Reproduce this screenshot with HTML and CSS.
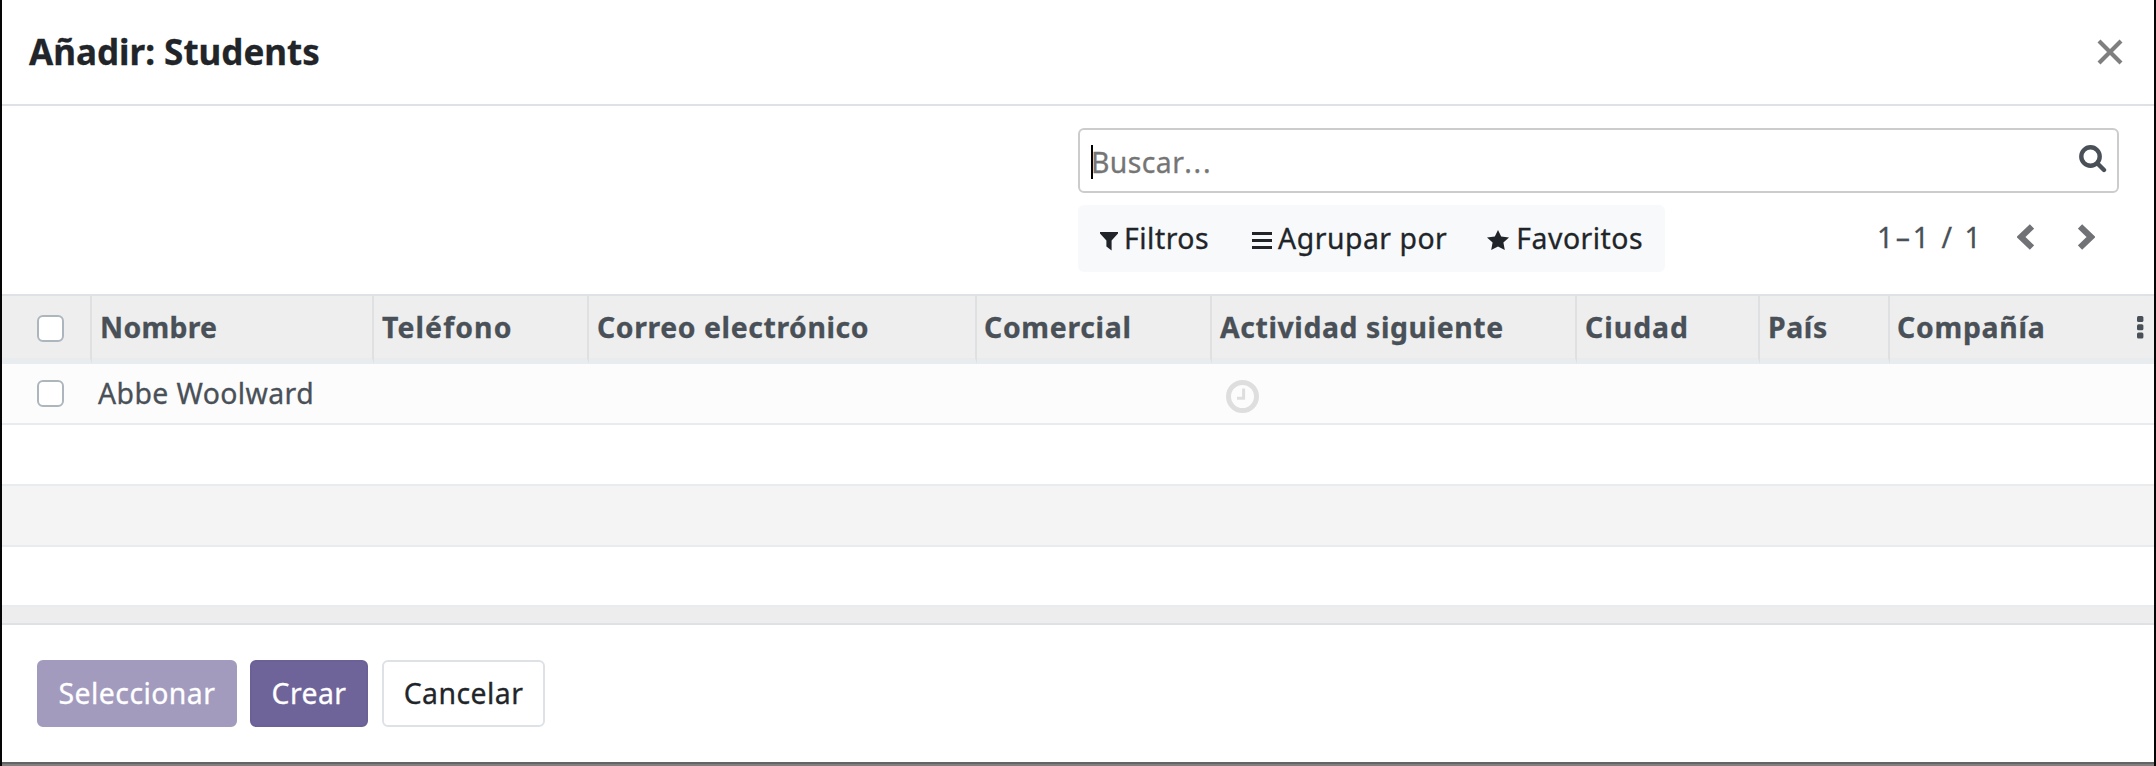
FILE: index.html
```html
<!DOCTYPE html>
<html lang="es">
<head>
<meta charset="utf-8">
<title>Añadir: Students</title>
<link rel="stylesheet" href="styles.css">
</head>
<body>
<div class="modal">
  <header class="modal-header">
    <h1 class="title">Añadir: Students</h1>
    <svg class="close" viewBox="0 0 26 26"><path d="M2 2 24 24M24 2 2 24"/></svg>
  </header>

  <section class="control-panel">
    <div class="search">
      <span class="caret"></span>
      <span class="placeholder">Buscar<span class="dots">...</span></span>
      <svg class="search-icon" viewBox="0 0 28 28"><circle cx="11.5" cy="11.5" r="9.2"/><path d="M18.5 18.5 25 25"/></svg>
    </div>
    <div class="tools">
      <div class="filters">
        <span class="filter"><svg class="funnel" viewBox="0 0 18 19"><path d="M0 0H18V1.6L11.6 8.4V18.6L6.4 14.6V8.4L0 1.6Z"/></svg>Filtros</span>
        <span class="filter"><svg class="bars" viewBox="0 0 20 17"><path d="M0 0H20V3H0ZM0 7H20V10H0ZM0 14H20V17H0Z"/></svg>Agrupar por</span>
        <span class="filter"><svg class="star" viewBox="0 0 22 20"><path d="M11 0 14.2 6.5 22 7.6 16.4 12.6 17.8 20 11 16.5 4.2 20 5.6 12.6 0 7.6 7.8 6.5Z"/></svg>Favoritos</span>
      </div>
      <div class="pager">
        <span class="count">1–1 / 1</span>
        <svg class="chevron" viewBox="0 0 17 26"><path d="M15 2.4 4 13 15 23.6"/></svg>
        <svg class="chevron next" viewBox="0 0 17 26"><path d="M2 2.4 13 13 2 23.6"/></svg>
      </div>
    </div>
  </section>

  <section class="list">
    <div class="row head">
      <div class="cell check"><span class="box"></span></div>
      <div class="cell nombre">Nombre</div>
      <div class="cell telefono">Teléfono</div>
      <div class="cell correo">Correo electrónico</div>
      <div class="cell comercial">Comercial</div>
      <div class="cell actividad">Actividad siguiente</div>
      <div class="cell ciudad">Ciudad</div>
      <div class="cell pais">País</div>
      <div class="cell compania">Compañía
        <svg class="dots-menu" viewBox="0 0 7 23"><rect width="6.4" height="6" rx="1.5"/><rect y="8.3" width="6.4" height="6" rx="1.5"/><rect y="16.6" width="6.4" height="6" rx="1.5"/></svg>
      </div>
    </div>
    <div class="row record">
      <div class="check"><span class="box"></span></div>
      <div class="name">Abbe Woolward</div>
      <div class="activity"><svg class="clock" viewBox="0 0 33 33"><circle cx="16.5" cy="16.5" r="14"/><path d="M17.6 8.5V18.2H11"/></svg></div>
    </div>
    <div class="row blank"></div>
    <div class="row blank shaded"></div>
    <div class="row blank last"></div>
    <div class="list-foot"></div>
  </section>

  <footer class="modal-footer">
    <button class="btn select" disabled>Seleccionar</button>
    <button class="btn create">Crear</button>
    <button class="btn cancel">Cancelar</button>
  </footer>
</div>
</body>
</html>
```
FILE: styles.css
```css
* { box-sizing: border-box; }

body {
  margin: 0;
  height: 766px;
  overflow: hidden;
  padding: 0 2px;
  background: #050506;
  font: 28.4px/40px "Noto Sans", "Open Sans", sans-serif;
  letter-spacing: 0.4px;
  color: #212529;
  -webkit-text-stroke: 0.3px currentColor;
}

svg { display: block; flex: none; }

.modal {
  display: flex;
  flex-direction: column;
  height: 766px;
  background: #fff;
  border-bottom: 2px solid #808080;
  box-shadow: inset 0 -2px 0 #646464;
}

.modal-header {
  display: flex;
  align-items: center;
  justify-content: space-between;
  height: 106px;
  padding: 0 31px 1px 27px;
  border-bottom: 2px solid #dee2e6;
}

.title {
  margin: 0;
  font-size: 35px;
  line-height: 48px;
  font-weight: 700;
  letter-spacing: 0;
}

.close {
  width: 26px;
  height: 26px;
  fill: none;
  stroke: #7f7f7f;
  stroke-width: 4.2;
}

.control-panel {
  height: 188px;
  padding: 22px 35px 0 1076px;
}

.search {
  display: flex;
  align-items: center;
  height: 65px;
  padding: 0 10px 0 11px;
  border: 2px solid #ccc;
  border-radius: 6px;
}

.caret {
  width: 2px;
  height: 34px;
  margin: 3px -2px 0 0;
  background: #000;
  z-index: 1;
}

.placeholder {
  flex: 1;
  margin-top: 3px;
  color: #757575;
}

.dots { letter-spacing: 1.7px; }

.search-icon {
  width: 28px;
  height: 28px;
  margin-top: -4px;
  fill: none;
  stroke: #495057;
  stroke-width: 4.4;
  stroke-linecap: round;
}

.tools {
  display: flex;
  justify-content: space-between;
  margin-top: 12px;
}

.filters {
  display: flex;
  width: 587px;
  height: 67px;
  padding: 0 0 2px 22px;
  align-items: center;
  border-radius: 6px;
  background: #f8f9fb;
}

.filter {
  display: flex;
  align-items: center;
  margin-right: 42px;
  letter-spacing: 0.5px;
  white-space: nowrap;
  fill: #212529;
}

.filter:last-child { margin-right: 0; }

.funnel { width: 18px; height: 19px; margin: 7px 6px 0 0; }
.bars { width: 20px; height: 17px; margin: 5px 6px 0 1px; }
.star { width: 22px; height: 20px; margin: 5px 7px 0 -2px; }

.pager {
  display: flex;
  align-items: center;
  height: 64px;
  color: #495057;
}

.count { width: 140px; letter-spacing: 2.6px; white-space: nowrap; }

.chevron {
  width: 17px;
  height: 26px;
  fill: none;
  stroke: #717275;
  stroke-width: 6.2;
}

.next { margin: 0 24px 0 44px; }

.row {
  display: grid;
  grid-template-columns: 90px 282px 215px 388px 235px 365px 183px 130px 1fr;
}

.head {
  height: 70px;
  border-top: 2px solid #dee2e6;
  background: #eee;
  color: #495057;
  font-weight: 700;
}

.cell {
  display: flex;
  align-items: center;
  padding-left: 8px;
  border-right: 2px solid #dee0e2;
  border-bottom: 6px solid #e9ecef;
  white-space: nowrap;
}

.nombre { letter-spacing: 0.3px; }
.telefono { letter-spacing: 1.1px; }
.correo { letter-spacing: 0.6px; }
.comercial { padding-left: 7px; letter-spacing: 0.7px; }
.actividad { letter-spacing: 0.6px; }
.ciudad { letter-spacing: 1px; }
.pais { letter-spacing: 0.6px; }
.compania {
  justify-content: space-between;
  padding: 0 10px 0 7px;
  border-right: 0;
  letter-spacing: 0.75px;
}

.check {
  display: flex;
  align-items: center;
  padding-left: 35px;
}

.box {
  width: 27px;
  height: 27px;
  border: 2px solid #adb5bd;
  border-radius: 6px;
  background: #fff;
}

.head .box { margin-top: 3px; }

.dots-menu { width: 7px; height: 23px; fill: #495057; }

.record {
  height: 61px;
  align-items: center;
  border-bottom: 2px solid #e9ecef;
  background: #fcfcfc;
  color: #495057;
}

.record .box { margin-bottom: 1px; }

.name { grid-column: 2 / 6; padding: 0 0 2px 6px; }
.activity { grid-column: 6; padding: 6px 0 0 14px; }

.clock {
  width: 33px;
  height: 33px;
  fill: none;
  stroke: #dedede;
  stroke-width: 5;
}

.clock path { stroke-width: 3; }

.blank { height: 61px; border-bottom: 2px solid #e9ecef; }
.shaded { background: #f4f4f4; }
.last { height: 60px; }

.list-foot {
  height: 18px;
  background: #ededed;
  border-bottom: 2px solid #dee2e6;
}

.modal-footer {
  display: flex;
  padding: 35px;
}

.btn {
  height: 67px;
  padding: 0 0 2px;
  border: 2px solid transparent;
  border-radius: 6px;
  font: inherit;
  letter-spacing: 0.45px;
  color: #fff;
}

.select { width: 200px; background: #a29bbe; border-color: #a29bbe; }
.create { width: 118px; margin: 0 14px 0 13px; background: #6f6499; border-color: #6c6197; }
.cancel { width: 163px; border-color: #dee2e6; background: #fff; color: #212529; }
```
